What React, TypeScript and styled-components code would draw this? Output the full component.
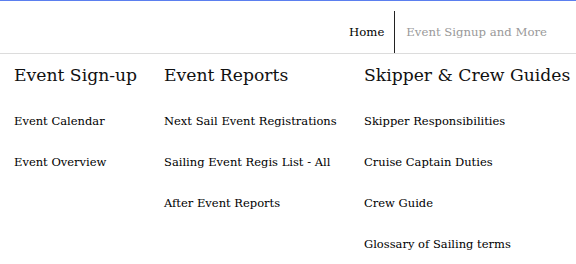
import React from "react";
import styled, { createGlobalStyle } from "styled-components";

const Global = createGlobalStyle`
  html, body { margin: 0; padding: 0; background: #fff; }
  body { font-family: "DejaVu Serif", Georgia, serif; }
`;

const Page = styled.div`
  width: 576px;
  height: 264px;
  overflow: hidden;
  border-top: 1px solid #5b7fef;
  box-sizing: border-box;
`;

const Header = styled.header`
  height: 52px;
  border-bottom: 1px solid #dcdcdc;
  display: flex;
  justify-content: flex-end;
  align-items: stretch;
  padding-right: 19px;
`;

const NavItem = styled.a<{ $active?: boolean; $divider?: boolean }>`
  display: flex;
  align-items: center;
  margin-top: 10px;
  padding: 0 10px 0 11px;
  font-size: 11.7px;
  text-decoration: none;
  white-space: nowrap;
  color: ${(p) => (p.$active ? "#000" : "#999")};
  border-left: ${(p) => (p.$divider ? "1px solid #222" : "none")};
`;

const Menu = styled.div`
  display: flex;
  padding-left: 14px;
`;

const Column = styled.div<{ $w: number }>`
  width: ${(p) => p.$w}px;
  flex: none;
  display: flex;
  flex-direction: column;
`;

const Heading = styled.h2`
  margin: 9px 0 0;
  font-size: 17.2px;
  font-weight: 400;
  line-height: 24px;
  white-space: nowrap;
  color: #111;
`;

const Links = styled.div`
  display: flex;
  flex-direction: column;
  gap: 25px;
  margin-top: 26px;
`;

const LinkItem = styled.a`
  font-size: 11.5px;
  line-height: 16px;
  white-space: nowrap;
  color: #000;
  text-decoration: none;
`;

const columns = [
  { w: 150, title: "Event Sign-up", links: ["Event Calendar", "Event Overview"] },
  {
    w: 200,
    title: "Event Reports",
    links: ["Next Sail Event Registrations", "Sailing Event Regis List - All", "After Event Reports"],
  },
  {
    w: 212,
    title: "Skipper & Crew Guides",
    links: ["Skipper Responsibilities", "Cruise Captain Duties", "Crew Guide", "Glossary of Sailing terms"],
  },
];

export default function App() {
  return (
    <Page>
      <Global />
      <Header>
        <NavItem $active href="#">Home</NavItem>
        <NavItem $divider href="#">Event Signup and More</NavItem>
      </Header>
      <Menu>
        {columns.map((c) => (
          <Column key={c.title} $w={c.w}>
            <Heading>{c.title}</Heading>
            <Links>
              {c.links.map((l) => (
                <LinkItem key={l} href="#">{l}</LinkItem>
              ))}
            </Links>
          </Column>
        ))}
      </Menu>
    </Page>
  );
}
